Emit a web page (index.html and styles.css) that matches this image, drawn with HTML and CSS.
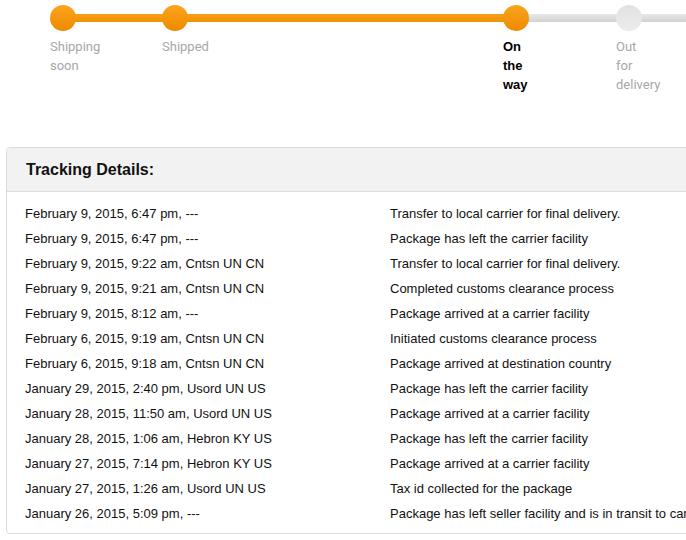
FILE: index.html
```html
<!DOCTYPE html>
<html>
<head>
<meta charset="utf-8">
<link rel="stylesheet" href="styles.css">
</head>
<body>
<div class="page">
  <div class="stepper">
    <div class="step step-1 done">
      <div class="track"><span class="dot"></span><span class="bar"></span></div>
      <div class="label">Shipping soon</div>
    </div>
    <div class="step step-2 done">
      <div class="track"><span class="dot"></span><span class="bar"></span></div>
      <div class="label">Shipped</div>
    </div>
    <div class="step step-3 current">
      <div class="track"><span class="dot"></span><span class="bar"></span></div>
      <div class="label">On the way</div>
    </div>
    <div class="step step-4 todo">
      <div class="track"><span class="dot"></span><span class="bar"></span></div>
      <div class="label">Out for delivery</div>
    </div>
  </div>

  <div class="panel">
    <div class="panel-head">Tracking Details:</div>
    <div class="panel-body">
      <div class="row"><span class="when">February 9, 2015, 6:47 pm, ---</span><span class="what">Transfer to local carrier for final delivery.</span></div>
      <div class="row"><span class="when">February 9, 2015, 6:47 pm, ---</span><span class="what">Package has left the carrier facility</span></div>
      <div class="row"><span class="when">February 9, 2015, 9:22 am, Cntsn UN CN</span><span class="what">Transfer to local carrier for final delivery.</span></div>
      <div class="row"><span class="when">February 9, 2015, 9:21 am, Cntsn UN CN</span><span class="what">Completed customs clearance process</span></div>
      <div class="row"><span class="when">February 9, 2015, 8:12 am, ---</span><span class="what">Package arrived at a carrier facility</span></div>
      <div class="row"><span class="when">February 6, 2015, 9:19 am, Cntsn UN CN</span><span class="what">Initiated customs clearance process</span></div>
      <div class="row"><span class="when">February 6, 2015, 9:18 am, Cntsn UN CN</span><span class="what">Package arrived at destination country</span></div>
      <div class="row"><span class="when">January 29, 2015, 2:40 pm, Usord UN US</span><span class="what">Package has left the carrier facility</span></div>
      <div class="row"><span class="when">January 28, 2015, 11:50 am, Usord UN US</span><span class="what">Package arrived at a carrier facility</span></div>
      <div class="row"><span class="when">January 28, 2015, 1:06 am, Hebron KY US</span><span class="what">Package has left the carrier facility</span></div>
      <div class="row"><span class="when">January 27, 2015, 7:14 pm, Hebron KY US</span><span class="what">Package arrived at a carrier facility</span></div>
      <div class="row"><span class="when">January 27, 2015, 1:26 am, Usord UN US</span><span class="what">Tax id collected for the package</span></div>
      <div class="row"><span class="when">January 26, 2015, 5:09 pm, ---</span><span class="what">Package has left seller facility and is in transit to carrier</span></div>
    </div>
  </div>
</div>
</body>
</html>
```

FILE: styles.css
```css
html, body {
  margin: 0;
  padding: 0;
  background: #fff;
  overflow: hidden;
}
body {
  font-family: "Liberation Sans", Arial, sans-serif;
  color: #000;
  width: 686px;
  height: 540px;
}
.page {
  width: 900px;
}
.stepper {
  display: flex;
  padding: 5px 0 0 50px;
  height: 147px;
  box-sizing: border-box;
}
.step {
  display: flex;
  flex-direction: column;
}
.step-1 { width: 112px; }
.step-2 { width: 341px; }
.step-3 { width: 113px; }
.step-4 { width: 200px; }
.track {
  display: flex;
  align-items: center;
  height: 26px;
}
.dot {
  width: 26px;
  height: 26px;
  border-radius: 50%;
  flex: none;
  position: relative;
  z-index: 1;
}
.bar {
  flex: 1;
  height: 8px;
  margin-left: -1px;
  margin-right: -1px;
}
.done .dot, .current .dot {
  background: linear-gradient(#faa41e, #ee8a00);
}
.done .bar {
  background: linear-gradient(#f8a01a, #f19200);
}
.current .bar, .todo .bar {
  background: linear-gradient(#e8e8e8, #d2d2d2);
}
.todo .dot {
  background: linear-gradient(#e2e2e2, #ececec);
}
.label {
  margin-top: 6px;
  font-size: 13px;
  line-height: 19px;
  color: #a7a7a7;
  font-family: Roboto, "Liberation Sans", Arial, sans-serif;
}
.step-1 .label { width: 60px; }
.step-3 .label, .step-4 .label { width: 30px; }
.current .label {
  color: #000;
  font-weight: bold;
  font-family: "Liberation Sans", Arial, sans-serif;
}
.panel {
  margin-left: 6px;
  width: 800px;
  border: 1px solid #dcdcdc;
  border-radius: 4px;
}
.panel-head {
  background: #f2f2f2;
  height: 43px;
  border-bottom: 1px solid #dcdcdc;
  border-radius: 4px 0 0 0;
  display: flex;
  align-items: center;
  padding-left: 19px;
  font-weight: bold;
  font-size: 16px;
  color: #111;
}
.panel-body {
  padding: 9px 0 7px 18px;
}
.row {
  display: flex;
  height: 25px;
  align-items: center;
  font-size: 13px;
  color: #111;
}
.when {
  width: 365px;
  flex: none;
}
.what {
  white-space: nowrap;
}
```
